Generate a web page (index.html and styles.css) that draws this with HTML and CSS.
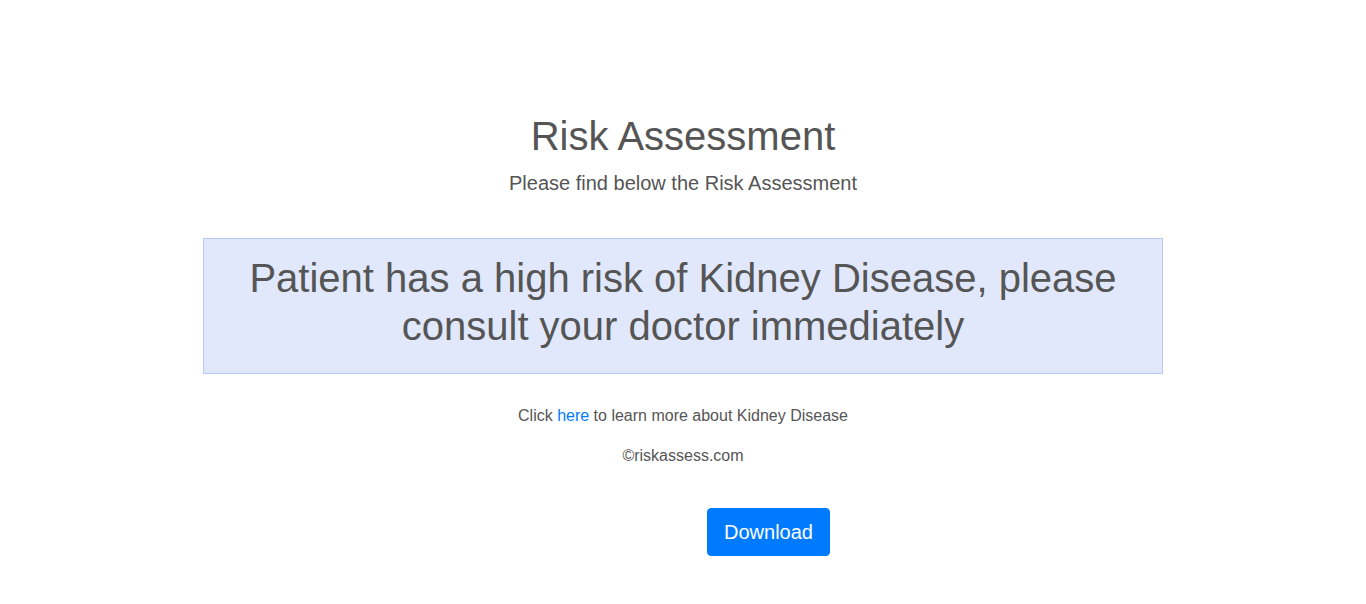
FILE: index.html
```html
<!DOCTYPE html>
<html lang="en">
<head>
<meta charset="utf-8">
<title>Risk Assessment</title>
<link rel="stylesheet" href="styles.css">
</head>
<body>
<main class="page">
  <h1 class="title">Risk Assessment</h1>
  <p class="subtitle">Please find below the Risk Assessment</p>
  <div class="alert">
    <h2 class="alert-text">Patient has a high risk of Kidney Disease, please consult your doctor immediately</h2>
  </div>
  <p class="info">Click <a href="#" class="link">here</a> to learn more about Kidney Disease</p>
  <p class="copy">©riskassess.com</p>
  <div class="actions">
    <button class="btn" type="button">Download</button>
  </div>
</main>
</body>
</html>
```

FILE: styles.css
```css
html, body {
  margin: 0;
  padding: 0;
  background: #fff;
}
body {
  font-family: "Liberation Sans", Arial, sans-serif;
  color: #555;
}
.page {
  display: flex;
  flex-direction: column;
  align-items: center;
  text-align: center;
}
.title {
  margin: 112px 0 0;
  font-size: 40px;
  font-weight: 400;
  line-height: 48px;
}
.subtitle {
  margin: 8px 0 0;
  font-size: 20px;
  line-height: 30px;
}
.alert {
  box-sizing: border-box;
  width: 960px;
  margin-top: 40px;
  padding: 15px 20px 23px;
  background: #e1e8fc;
  border: 1px solid #b9c9f6;
}
.alert-text {
  margin: 0;
  font-size: 40px;
  font-weight: 400;
  line-height: 48px;
}
.info {
  margin: 30px 0 0;
  font-size: 16px;
  line-height: 24px;
}
.link {
  color: #007bff;
  text-decoration: none;
}
.copy {
  margin: 16px 0 0;
  font-size: 16px;
  line-height: 24px;
}
.actions {
  display: flex;
  justify-content: center;
  width: 100%;
  margin-top: 40px;
  padding-left: 171px;
  box-sizing: border-box;
}
.btn {
  font-family: "Liberation Sans", Arial, sans-serif;
  font-size: 20px;
  line-height: 30px;
  padding: 8px 16px;
  color: #fff;
  background: #007bff;
  border: 1px solid #007bff;
  border-radius: 4px;
  cursor: pointer;
}
```
